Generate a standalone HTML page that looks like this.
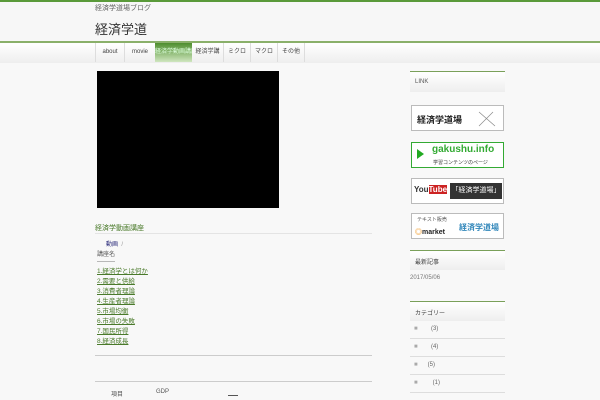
<!DOCTYPE html>
<html><head><meta charset="utf-8"><style>
*{margin:0;padding:0;box-sizing:border-box}
body{width:600px;height:400px;overflow:hidden;background:#f8f8f8;font-family:"Liberation Sans","Noto Sans CJK JP",sans-serif;color:#333;position:relative}
.a{position:absolute}
a{color:#4a7a2a}
.n div{white-space:nowrap;overflow:hidden;text-align:center}
</style></head><body>
<div class="a" style="left:0;top:0;width:600px;height:2px;background:#5a9a3a"></div>
<div class="a" style="left:0;top:2px;width:600px;height:40px;background:#f7f7f7"></div>
<div class="a" style="left:95px;top:3px;font-size:7px;color:#666">経済学道場ブログ</div>
<div class="a" style="left:95px;top:19px;font-size:13px;color:#333">経済学道</div>
<div class="a" style="left:0;top:41px;width:600px;height:2px;background:#8ab06a"></div>
<div class="a" style="left:0;top:43px;width:600px;height:20px;background:linear-gradient(#fff,#eee)"></div>
<div class="a n" style="left:95px;top:43px;height:19px;display:flex;font-size:6px;color:#444;line-height:19px">
<div style="width:29px;border-left:1px solid #ddd">about</div>
<div style="width:31px;border-left:1px solid #ddd">movie</div>
<div style="width:37px;background:linear-gradient(#4e8e2e,#cfe6bf);color:#dfd">経済学動画講座</div>
<div style="width:32px;border-right:1px solid #ddd">経済学講</div>
<div style="width:27px;border-right:1px solid #ddd">ミクロ</div>
<div style="width:27px;border-right:1px solid #ddd">マクロ</div>
<div style="width:27px;border-right:1px solid #ddd">その他</div>
</div>
<div class="a" style="left:97px;top:71px;width:182px;height:137px;background:#000"></div>
<div class="a" style="left:95px;top:223px;font-size:7px;color:#4a7a2a">経済学動画講座</div>
<div class="a" style="left:95px;top:233px;width:277px;height:1px;background:#e4e4e4"></div>
<div class="a" style="left:106px;top:239px;font-size:6px;color:#2a2a7a">動画 <span style="color:#999">&nbsp;/</span></div>
<div class="a" style="left:97px;top:249px;font-size:6px;color:#555">講座名</div>
<div class="a" style="left:97px;top:259px;font-size:6px;color:#666">―――</div>
<div class="a" style="left:97px;top:267px;font-size:6.5px;line-height:10px;color:#4a7a2a;text-decoration:underline">
1.経済学とは何か<br>2.需要と供給<br>3.消費者理論<br>4.生産者理論<br>5.市場均衡<br>6.市場の失敗<br>7.国民所得<br>8.経済成長</div>
<div class="a" style="left:95px;top:355px;width:277px;height:1px;background:#ccc"></div>
<div class="a" style="left:95px;top:381px;width:277px;height:1px;background:#ccc"></div>
<div class="a" style="left:111px;top:389px;font-size:6px;color:#555">項目</div>
<div class="a" style="left:156px;top:389px;font-size:6px;color:#555">GDP</div>
<div class="a" style="left:228px;top:395px;width:10px;height:1px;background:#555"></div>

<div class="a" style="left:410px;top:71px;width:95px;height:21px;border-top:1px solid #7aa05a;background:linear-gradient(#fff,#eee);font-size:6px;color:#555;padding:7px 5px">LINK</div>
<div class="a" style="left:411px;top:105px;width:93px;height:26px;border:1px solid #bbb;background:#fff;font-size:9px;font-weight:bold;color:#222;padding:7px 5px">経済学道場<svg style="position:absolute;right:6px;top:3px" width="20" height="20"><path d="M2 3L18 17M2 17L16 3" stroke="#888" stroke-width=".7" fill="none"/></svg></div>
<div class="a" style="left:411px;top:142px;width:93px;height:26px;border:1px solid #3a3;background:#fff">
<div class="a" style="left:5px;top:6px;width:0;height:0;border-left:7px solid #2a2;border-top:5px solid transparent;border-bottom:5px solid transparent"></div>
<div class="a" style="left:20px;top:1px;font-size:10px;font-weight:bold;color:#3a3">gakushu.info</div>
<div class="a" style="left:21px;top:16px;font-size:5px;color:#333">学習コンテンツのページ</div></div>
<div class="a" style="left:411px;top:178px;width:93px;height:26px;border:1px solid #bbb;background:#fff">
<div class="a" style="left:2px;top:6px;font-size:8px;font-weight:bold;color:#333">You<span style="background:#c22;color:#fff">Tube</span></div>
<div class="a" style="left:38px;top:4px;width:52px;height:16px;background:#333;color:#fff;font-size:7px;line-height:16px;text-align:center">「経済学道場」</div></div>
<div class="a" style="left:411px;top:213px;width:93px;height:26px;border:1px solid #bbb;background:#fff">
<div class="a" style="left:5px;top:2px;font-size:5px;color:#555">テキスト販売</div>
<div class="a" style="left:3px;top:13px;font-size:7px;font-weight:bold;color:#222"><span style="color:#e80">◎</span>market</div>
<div class="a" style="left:47px;top:8px;font-size:8px;font-weight:bold;color:#38b">経済学道場</div></div>

<div class="a" style="left:410px;top:250px;width:95px;height:20px;border-top:1px solid #7aa05a;background:linear-gradient(#fff,#eee);font-size:6px;color:#444;padding:6px 5px">最新記事</div>
<div class="a" style="left:410px;top:275px;font-size:6px;color:#777">2017/05/06</div>
<div class="a" style="left:410px;top:301px;width:95px;height:20px;border-top:1px solid #7aa05a;background:linear-gradient(#fff,#eee);font-size:6px;color:#444;padding:6px 5px">カテゴリー</div>
<div class="a" style="left:410px;top:321px;width:95px;font-size:6px;color:#666">
<div style="height:18px;border-bottom:1px solid #ddd;padding:5px 4px"><span style="color:#aaa">■</span>&nbsp;&nbsp;&nbsp;&nbsp;&nbsp;&nbsp;&nbsp;&nbsp;(3)</div>
<div style="height:18px;border-bottom:1px solid #ddd;padding:5px 4px"><span style="color:#aaa">■</span>&nbsp;&nbsp;&nbsp;&nbsp;&nbsp;&nbsp;&nbsp;&nbsp;(4)</div>
<div style="height:18px;border-bottom:1px solid #ddd;padding:5px 4px"><span style="color:#aaa">■</span>&nbsp;&nbsp;&nbsp;&nbsp;&nbsp;&nbsp;(5)</div>
<div style="height:18px;border-bottom:1px solid #ddd;padding:5px 4px"><span style="color:#aaa">■</span>&nbsp;&nbsp;&nbsp;&nbsp;&nbsp;&nbsp;&nbsp;&nbsp;&nbsp;(1)</div>
</div>
</body></html>
